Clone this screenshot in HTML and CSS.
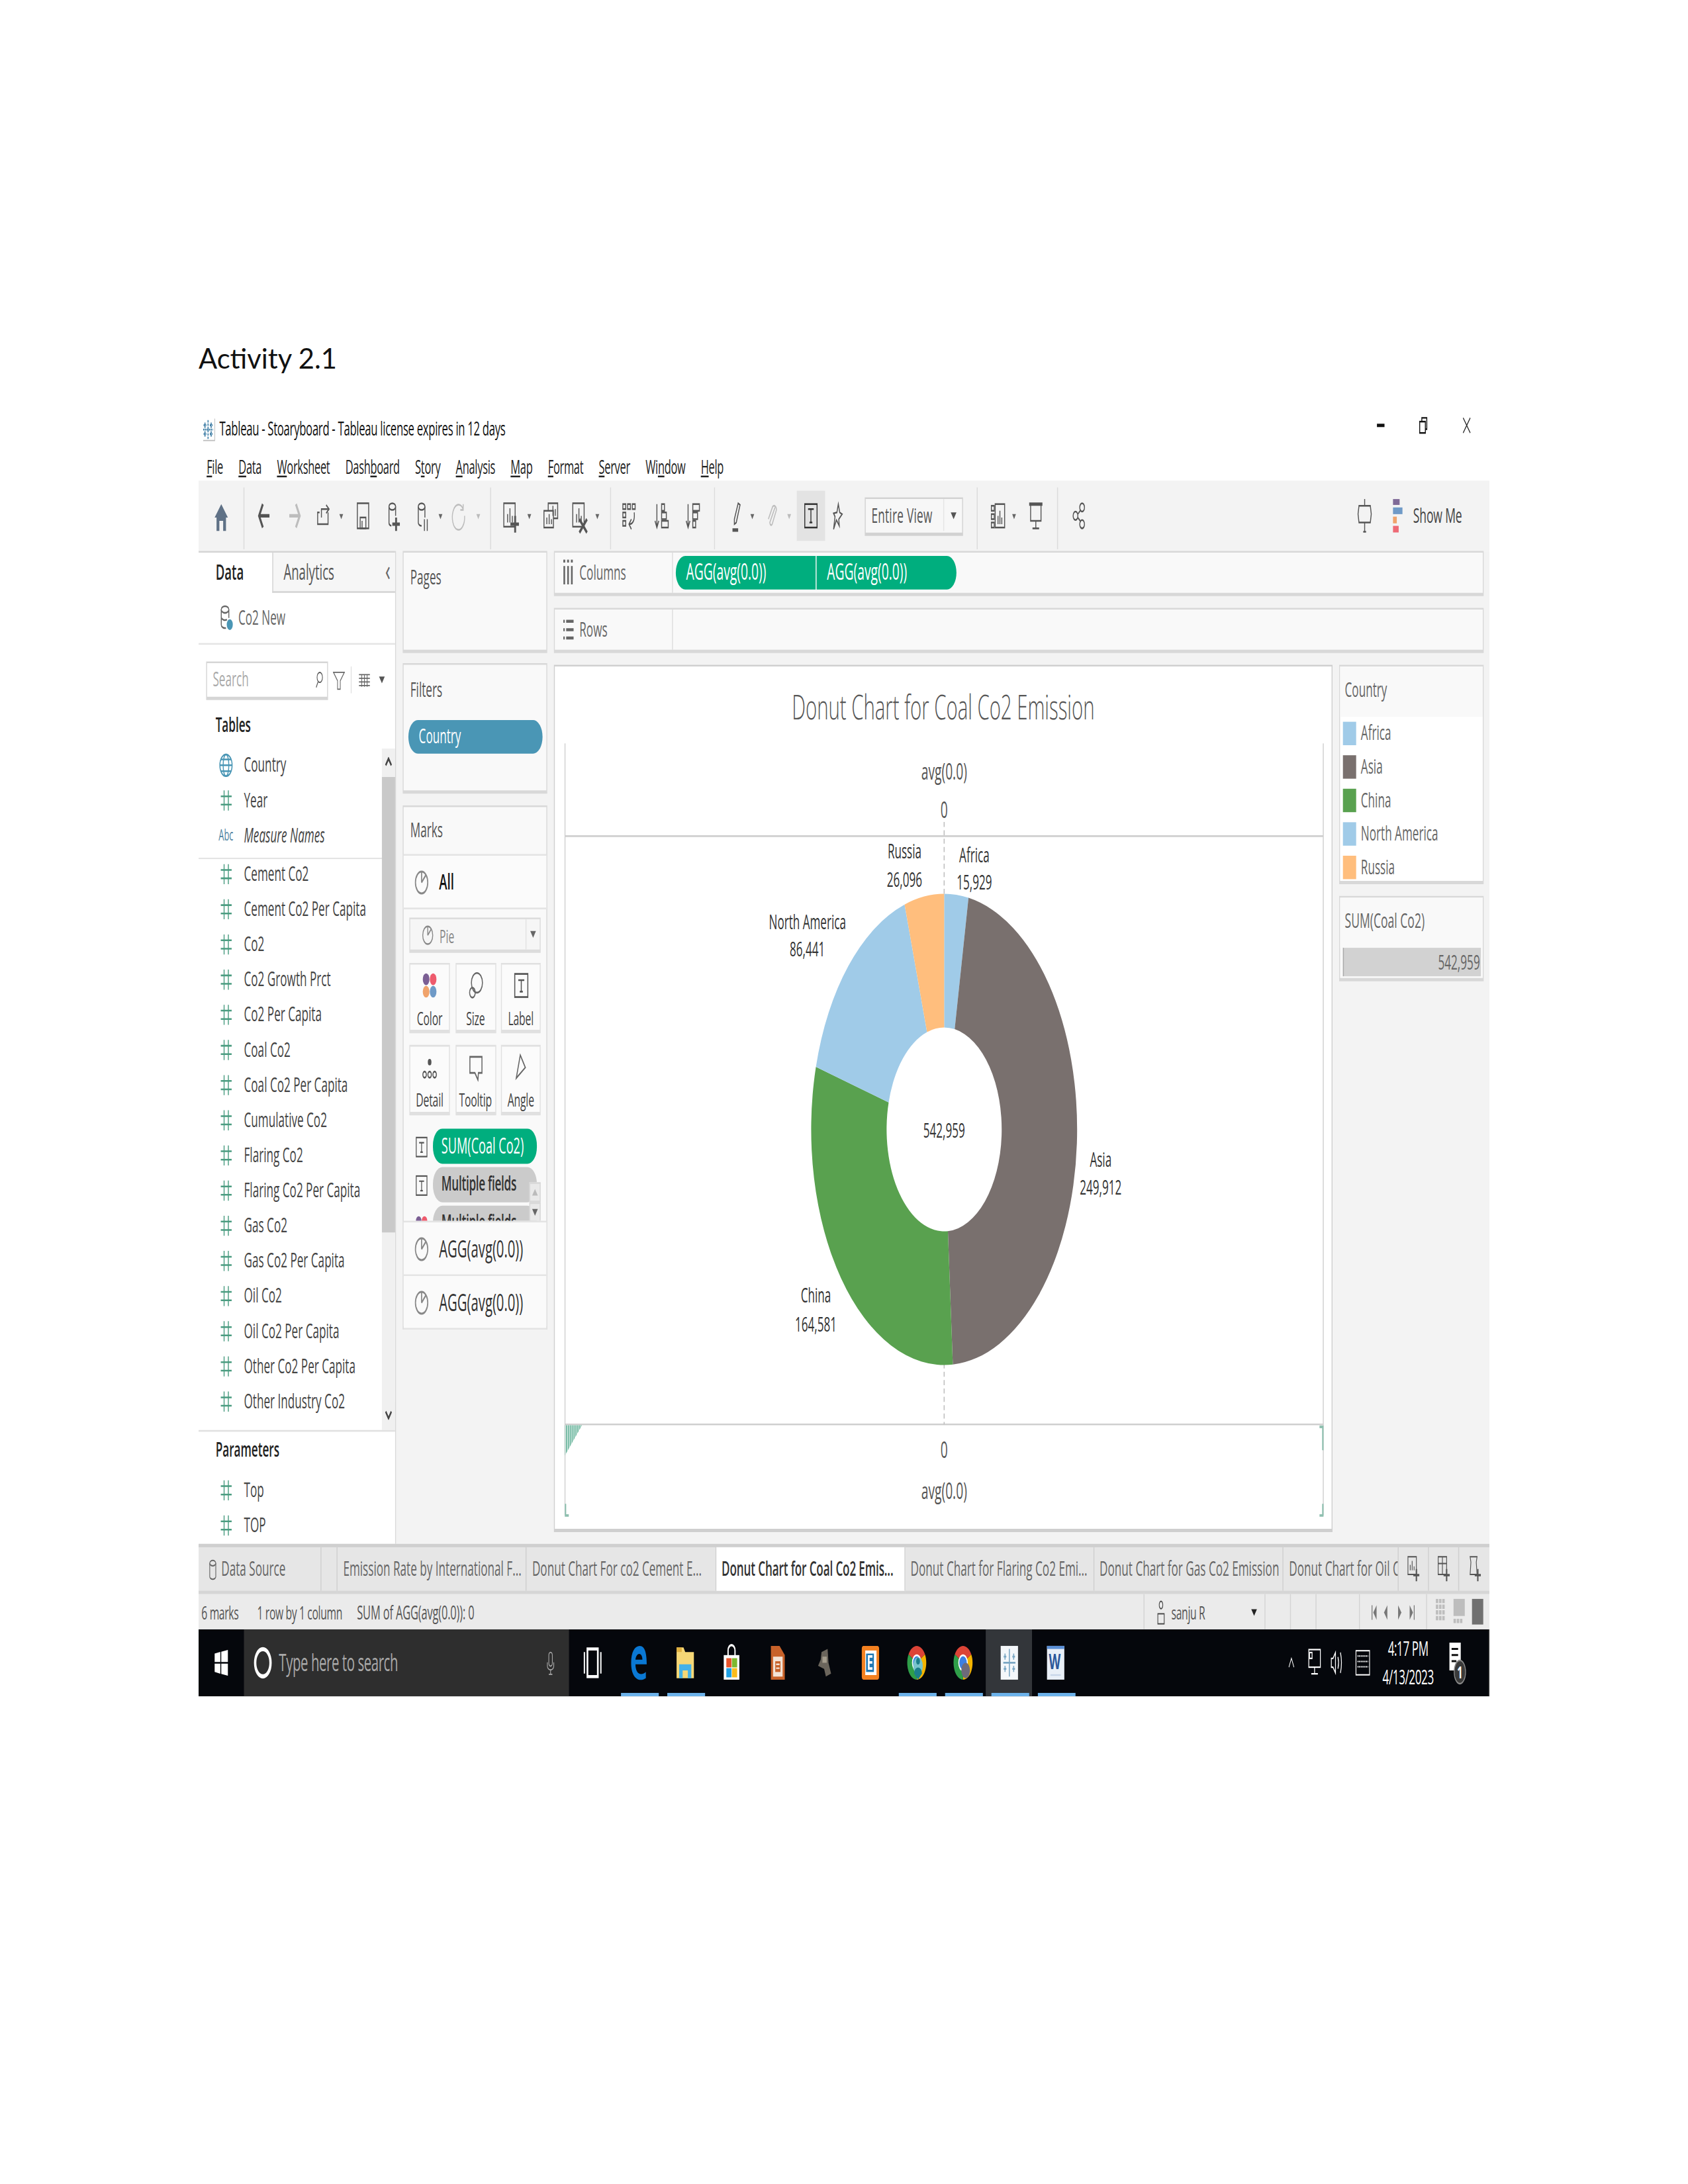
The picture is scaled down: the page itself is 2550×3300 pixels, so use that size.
FILE: index.html
```html
<!DOCTYPE html>
<html lang="en">
<head>
<meta charset="utf-8">
<title>Activity 2.1</title>
<link rel="stylesheet" href="styles.css">
</head>
<body>
<svg class="defs" width="0" height="0" aria-hidden="true">
  <defs>
    <symbol id="hash" viewBox="0 0 16 16"><path d="M6 2V14M10.500 2V14M2.500 5.500H14M2.500 10.500H14" fill="none" stroke="#4a9c80" stroke-width="1"/></symbol>
    <symbol id="globe" viewBox="0 0 16 16"><g fill="none" stroke="#4a96b5" stroke-width="1"><circle cx="8" cy="8" r="6.500"/><ellipse cx="8" cy="8" rx="3" ry="6.500"/><path d="M1.500 8H14.500M2.500 4.500H13.500M2.500 11.500H13.500"/></g></symbol>
    <symbol id="pie" viewBox="0 0 16 16"><g fill="none" stroke="#888" stroke-width="1.200"><circle cx="8" cy="8" r="6.500"/><path d="M8 8V1.500M8 8L12.500 3.500"/></g></symbol>
    <symbol id="tbox" viewBox="0 0 16 16"><g fill="none" stroke="#555" stroke-width="1"><rect x="1.500" y="1.500" width="13" height="13"/><path d="M5 5H11M8 5V11.500M6.500 11.500H9.500"/></g></symbol>
  </defs>
</svg>
<main class="page">
  <h1 class="activity">Activity 2.1</h1>
  <div class="app">
    <header class="titlebar">
      <svg class="tbicon" viewBox="0 0 16 16"><path d="M15 1V15H2" fill="none" stroke="#bbb" stroke-width=".7"/><g stroke="#3f7ea6" stroke-width="1.200" fill="none" stroke-dasharray="1.500 .6"><path d="M7.500 2V14M2 8H13M4 3.500V7M2.500 5.200H5.500M11 3.500V7M9.500 5.200H12.500M4 9V12.500M2.500 10.800H5.500M11 9V12.500M9.500 10.800H12.500"/></g></svg>
      <span class="titletext">Tableau - Stoaryboard - Tableau license expires in 12 days</span>
      <div class="winctrl">
        <span class="wc-min"></span>
        <svg class="wc-res" viewBox="0 0 16 16"><g fill="none" stroke="#111" stroke-width="1.300"><rect x="3" y="5" width="8" height="9"/><path d="M6 5V2H13V11H11"/></g></svg>
        <svg class="wc-x" viewBox="0 0 16 16"><path d="M3 2L13 14M13 2L3 14" fill="none" stroke="#222" stroke-width="1"/></svg>
      </div>
    </header>
    <nav class="menubar">
      <span><u>F</u>ile</span><span><u>D</u>ata</span><span><u>W</u>orksheet</span><span>Dash<u>b</u>oard</span><span>S<u>t</u>ory</span><span><u>A</u>nalysis</span><span><u>M</u>ap</span><span><u>F</u>ormat</span><span><u>S</u>erver</span><span>Wi<u>n</u>dow</span><span><u>H</u>elp</span>
    </nav>
    <div class="toolbar">
      <svg class="strip-a" viewBox="0 0 705 42">
        <g class="tb">
          <path d="M48 4V41M309 4V41M436 4V41M546 4V41" class="divl"/>
          <path d="M24 14L31 22H29V30H26V24H22V30H19V22H17Z" class="home"/>
          <g transform="translate(61,13)" class="heavy"><path d="M14 8H4M7 1L3 8L7 15"/></g>
          <g transform="translate(94,13)" class="heavy light"><path d="M2 8H12M9 1L13 8L9 15"/></g>
          <g transform="translate(125,13)"><path d="M3 6H1V13H12V6M5 9V4H12M10 1.500L13 4L10 6.500"/></g>
          <path d="M149 20h4l-2 3z" class="dd"/>
          <g transform="translate(166,13)"><rect x="2" y=".5" width="12" height="15"/><rect x="5" y="9" width="6" height="6.500"/><path d="M7 15.500V11"/></g>
          <g transform="translate(197,13)"><ellipse cx="8" cy="2.500" rx="3.500" ry="2"/><path d="M4.500 2.500V12A3.500 2 0 0 0 7 14M11.500 2.500V8"/><path d="M12 9V17M8 13H16" class="heavy"/></g>
          <g transform="translate(228,13)"><ellipse cx="8" cy="2.500" rx="3.500" ry="2"/><path d="M4.500 2.500V12A3.500 2 0 0 0 8 14M11.500 2.500V9M11 10V17M14 10V17"/></g>
          <path d="M254 20h4l-2 3z" class="dd"/>
          <g transform="translate(267,13)" class="light"><path d="M13 4A6.500 7.500 0 1 0 14.500 8M13 1V4.500H10"/></g>
          <path d="M294 20h4l-2 3z" class="dd lightf"/>
          <g transform="translate(321,13)"><rect x="2" y=".5" width="12" height="14"/><path d="M6 12V7M8.500 12V3.500M11 12V8"/><path d="M14 8V18M9 13H18" class="heavy"/></g>
          <path d="M348 20h4l-2 3z" class="dd"/>
          <g transform="translate(364,13)"><rect x="6" y=".5" width="10" height="9"/><rect x="1.500" y="5" width="10" height="10" class="bgf"/><path d="M4.500 13V9M7 13V7M9.500 13V10"/><path d="M11 2V8M13.500 4V8"/></g>
          <g transform="translate(394,13)"><rect x="2" y=".5" width="12" height="14"/><path d="M6 12V7M8.500 12V3.500M11 12V8"/><path d="M9 10L17 18M17 10L9 18" class="heavy"/></g>
          <path d="M420 20h4l-2 3z" class="dd"/>
          <g transform="translate(448,13)"><rect x="1" y="1" width="3" height="3"/><rect x="6" y="1" width="3" height="3"/><rect x="11" y="1" width="3" height="3"/><rect x="1" y="6" width="3" height="3"/><rect x="1" y="11" width="3" height="3"/><path d="M13 6C14 11 11 13 8 13M10 10L7.500 13L10 16"/></g>
          <g transform="translate(482,13)"><path d="M3 1V15M1 11L3 15L5 11"/><rect x="8" y="1" width="3" height="4"/><rect x="8" y="6" width="5" height="4"/><rect x="8" y="11" width="7" height="4"/></g>
          <g transform="translate(515,13)"><path d="M3 1V15M1 11L3 15L5 11"/><rect x="8" y="1" width="7" height="4"/><rect x="8" y="6" width="5" height="4"/><rect x="8" y="11" width="3" height="4"/></g>
          <g transform="translate(561,13)"><path d="M10 .5L12 1.500L8 12L6 13L6 10Z"/><path d="M4 16.500H10" class="heavy"/></g>
          <path d="M584 20h4l-2 3z" class="dd"/>
          <g transform="translate(599,13)" class="light"><path d="M11 3L5.500 12A1.500 2 0 0 0 8 13L12.500 4.500A2.500 2.500 0 0 0 8.500 2.500L4 10"/></g>
          <path d="M623 20h4l-2 3z" class="dd lightf"/>
          <rect x="633" y="6" width="30" height="30" class="active-bg"/>
          <g transform="translate(640,13)" class="dark"><rect x="1.500" y="1" width="13" height="14"/><path d="M5 4H11M8 4V12M6.500 12H9.500"/></g>
          <g transform="translate(668,13)"><path d="M9 1L10.500 6L13 7L9.500 10L10 14L7 10.500L4 16L5.500 8.500L4 6.500L7.500 6Z"/></g>
        </g>
      </svg>
      <div class="combo"><span class="combo-text">Entire View</span><span class="combo-arrow"></span></div>
      <svg class="strip-b" viewBox="1 0 149 42">
        <g class="tb">
          <path d="M16 4V41M101 4V41" class="divl"/>
          <g transform="translate(30,13)"><rect x="5" y="1" width="10" height="14"/><rect x="1" y="2" width="3" height="3"/><rect x="1" y="7" width="3" height="3"/><rect x="1" y="12" width="3" height="3"/><path d="M8 13V8M10 13V5M12 13V9"/></g>
          <path d="M53 20h4l-2 3z" class="dd"/>
          <g transform="translate(70,13)"><path d="M1 1H15" class="heavy"/><path d="M2.500 1V11H13.500V1M8 11V15M4.500 15.500H11.500"/></g>
          <g transform="translate(116,13)"><circle cx="11" cy="3" r="2.500"/><circle cx="4" cy="8" r="2.500"/><circle cx="11" cy="13" r="2.500"/><path d="M6.500 7L9.500 4.500M6.500 9L9.500 11.500"/></g>
        </g>
      </svg>
      <div class="tb-right">
        <svg class="tb-tip" viewBox="0 0 16 20"><g class="tb"><path d="M8 0V4M2 4H14L15 9L14 14H2L1 9ZM8 14V19M6.500 19.500H9.500"/></g></svg>
        <svg class="tb-show" viewBox="0 0 12 20"><rect x="1" y="0" width="7" height="3.500" fill="#7f6a97"/><rect x="1" y="5" width="10" height="4" fill="#6f9ac7"/><rect x="1" y="10.500" width="4" height="4" fill="#f0a36b"/><rect x="1" y="16" width="6" height="4" fill="#ee6a75"/></svg>
        <span class="showme">Show Me</span>
      </div>
    </div>

    <div class="workspace">
      <aside class="datapane">
        <div class="dtabs">
          <span class="dtab-data">Data</span>
          <span class="dtab-an">Analytics<span class="collapse">‹</span></span>
        </div>
        <div class="dsrow">
          <svg class="ic" viewBox="0 0 16 16"><g fill="none" stroke="#666" stroke-width="1"><ellipse cx="7" cy="3" rx="4" ry="2"/><path d="M3 3V12A4 2 0 0 0 8 14M11 3V8M3 7.500A4 2 0 0 0 9 9"/></g><circle cx="12" cy="12" r="3.200" fill="#4a96b5"/></svg>
          <span>Co2 New</span>
        </div>
        <div class="searchrow">
          <div class="searchbox"><span class="ph">Search</span>
            <svg class="ic-s" viewBox="0 0 12 14"><g fill="none" stroke="#555" stroke-width="1"><ellipse cx="7" cy="5" rx="3.800" ry="4"/><path d="M4.500 8.500L2 13"/></g></svg>
          </div>
          <svg class="ic-f" viewBox="0 0 18 16"><path d="M1 1H17L11 8V15H7V8Z" fill="none" stroke="#666" stroke-width="1"/></svg>
          <span class="vsep"></span>
          <svg class="ic-l" viewBox="0 0 18 12"><path d="M1 1H17M1 4H17M1 7H17M1 10H17M5 .5V11M9 .5V11M13 .5V11" fill="none" stroke="#666" stroke-width="1"/></svg>
          <span class="tri"></span>
        </div>
        <h2 class="phead tables">Tables</h2>
        <div class="listwrap">
          <ul class="fields">
            <li><svg class="ic"><use href="#globe"/></svg>Country</li>
            <li><svg class="ic"><use href="#hash"/></svg>Year</li>
            <li class="mn"><span class="abc">Abc</span><em>Measure Names</em></li>
            <li><svg class="ic"><use href="#hash"/></svg>Cement Co2</li>
            <li><svg class="ic"><use href="#hash"/></svg>Cement Co2 Per Capita</li>
            <li><svg class="ic"><use href="#hash"/></svg>Co2</li>
            <li><svg class="ic"><use href="#hash"/></svg>Co2 Growth Prct</li>
            <li><svg class="ic"><use href="#hash"/></svg>Co2 Per Capita</li>
            <li><svg class="ic"><use href="#hash"/></svg>Coal Co2</li>
            <li><svg class="ic"><use href="#hash"/></svg>Coal Co2 Per Capita</li>
            <li><svg class="ic"><use href="#hash"/></svg>Cumulative Co2</li>
            <li><svg class="ic"><use href="#hash"/></svg>Flaring Co2</li>
            <li><svg class="ic"><use href="#hash"/></svg>Flaring Co2 Per Capita</li>
            <li><svg class="ic"><use href="#hash"/></svg>Gas Co2</li>
            <li><svg class="ic"><use href="#hash"/></svg>Gas Co2 Per Capita</li>
            <li><svg class="ic"><use href="#hash"/></svg>Oil Co2</li>
            <li><svg class="ic"><use href="#hash"/></svg>Oil Co2 Per Capita</li>
            <li><svg class="ic"><use href="#hash"/></svg>Other Co2 Per Capita</li>
            <li><svg class="ic"><use href="#hash"/></svg>Other Industry Co2</li>
          </ul>
          <div class="vscroll">
            <span class="sb-btn"><svg viewBox="0 0 8 6"><path d="M1 5L4 1L7 5" fill="none" stroke="#444" stroke-width="1.500"/></svg></span>
            <span class="sb-thumb"></span>
            <span class="sb-rest"></span>
            <span class="sb-btn"><svg viewBox="0 0 8 6"><path d="M1 1L4 5L7 1" fill="none" stroke="#444" stroke-width="1.500"/></svg></span>
          </div>
        </div>
        <h2 class="phead params">Parameters</h2>
        <ul class="fields paramlist">
          <li><svg class="ic"><use href="#hash"/></svg>Top</li>
          <li><svg class="ic"><use href="#hash"/></svg>TOP</li>
        </ul>
      </aside>

      <section class="cardscol">
        <div class="card pages"><div class="cardhead">Pages</div></div>
        <div class="card filters">
          <div class="cardhead">Filters</div>
          <div class="fpill">Country</div>
        </div>
        <div class="card marks">
          <div class="cardhead markhead">Marks</div>
          <div class="markrow all"><svg class="ic"><use href="#pie"/></svg><strong>All</strong></div>
          <div class="marktype"><svg class="ic-p"><use href="#pie"/></svg><span class="mt-text">Pie</span><span class="mt-arrow"></span></div>
          <div class="markgrid">
            <div class="mbtn">
              <svg viewBox="0 0 16 16"><circle cx="4.500" cy="4.500" r="3.300" fill="#7b5f94"/><circle cx="11.500" cy="4.500" r="3.300" fill="#ee5b6d"/><circle cx="4.500" cy="11.500" r="3.300" fill="#f0a36b"/><circle cx="11.500" cy="11.500" r="3.300" fill="#6f9ac7"/></svg>Color</div>
            <div class="mbtn"><svg viewBox="0 0 16 16"><g fill="none" stroke="#666" stroke-width="1"><circle cx="9" cy="6.500" r="5.500"/><circle cx="4.500" cy="12" r="2.800"/></g></svg>Size</div>
            <div class="mbtn"><svg viewBox="0 0 16 16"><use href="#tbox"/></svg>Label</div>
            <div class="mbtn"><svg viewBox="0 0 16 16"><g fill="none" stroke="#555" stroke-width="1"><circle cx="3" cy="12" r="1.700"/><circle cx="8" cy="12" r="1.700"/><circle cx="13" cy="12" r="1.700"/></g><circle cx="8" cy="5" r="1.800" fill="#555"/></svg>Detail</div>
            <div class="mbtn"><svg viewBox="0 0 16 16"><path d="M2 2H14V11H10.500L10 15L7 11H2Z" fill="none" stroke="#666" stroke-width="1"/></svg>Tooltip</div>
            <div class="mbtn"><svg viewBox="0 0 16 16"><path d="M7 1L12 8L3 14Z" fill="none" stroke="#666" stroke-width="1"/></svg>Angle</div>
          </div>
          <div class="pillarea">
            <div class="pillrow"><svg class="ic-t"><use href="#tbox"/></svg><span class="mpill green">SUM(Coal Co2)</span></div>
            <div class="pillrow"><svg class="ic-t"><use href="#tbox"/></svg><span class="mpill gray">Multiple fields</span></div>
            <div class="pillrow"><svg class="ic-t" viewBox="0 0 16 16"><circle cx="4.500" cy="6" r="3.400" fill="#7b5f94"/><circle cx="11.500" cy="6" r="3.400" fill="#ee5b6d"/></svg><span class="mpill gray">Multiple fields</span></div>
            <div class="miniscroll"><span class="ms-up"></span><span class="ms-down"></span></div>
          </div>
          <div class="markrow agg"><svg class="ic"><use href="#pie"/></svg><span>AGG(avg(0.0))</span></div>
          <div class="markrow agg"><svg class="ic"><use href="#pie"/></svg><span>AGG(avg(0.0))</span></div>
        </div>
      </section>

      <section class="maincol">
        <div class="shelf">
          <div class="shelflabel">
            <svg class="ic-sh" viewBox="0 0 12 16"><path d="M2 4V15M6 4V15M10 4V15M1 1H3M5 1H7M9 1H11" fill="none" stroke="#666" stroke-width="1.800"/></svg>Columns
          </div>
          <div class="shelfpills"><span class="spill first">AGG(avg(0.0))</span><span class="spill last">AGG(avg(0.0))</span></div>
        </div>
        <div class="shelf">
          <div class="shelflabel">
            <svg class="ic-sh" viewBox="0 0 12 16"><path d="M1 3H2.500M4 3H12M1 8H2.500M4 8H12M1 13H2.500M4 13H12" fill="none" stroke="#666" stroke-width="1.800"/></svg>Rows
          </div>
        </div>
        <div class="vizrow">
          <div class="viz">
            <svg class="chart" viewBox="377 153 822 516" role="img" aria-label="Donut Chart for Coal Co2 Emission">
              <defs>
                <pattern id="hatch" width="2" height="4" patternUnits="userSpaceOnUse"><rect width="1.400" height="4" fill="#6fb8a0"/></pattern>
              </defs>
              <text x="788" y="184.500" class="ctitle">Donut Chart for Coal Co2 Emission</text>
              <path d="M387 199V661M1191 199V661M387 254.500H1191M387 606.500H1191" class="axis"/>
              <path d="M789 246V290M789 570V606.500" class="dash"/>
              <path d="M387 607H405L387 625Z" fill="url(#hatch)"/>
              <path d="M391 661H387.500V654M1187 661H1190.500V654M1187 608H1190.500V622" class="bracket"/>
              <text x="789" y="220.500" class="ax">avg(0.0)</text>
              <text x="789" y="243.500" class="ax">0</text>
              <text x="789" y="626.500" class="ax">0</text>
              <text x="789" y="651" class="ax">avg(0.0)</text>
              <g transform="translate(789,430)">
                <path d="M0 -141A141 141 0 0 1 25.840 -138.610L11.180 -59.970A61 61 0 0 0 0 -61Z" fill="#a0cbe8"/>
                <path d="M25.840 -138.610A141 141 0 0 1 9.200 140.700L3.980 60.870A61 61 0 0 0 11.180 -59.970Z" fill="#79706e"/>
                <path d="M9.200 140.700A141 141 0 0 1 -135.950 -37.400L-58.820 -16.180A61 61 0 0 0 3.980 60.870Z" fill="#59a14f"/>
                <path d="M-135.950 -37.400A141 141 0 0 1 -41.960 -134.610L-18.150 -58.240A61 61 0 0 0 -58.820 -16.180Z" fill="#a0cbe8"/>
                <path d="M-41.960 -134.610A141 141 0 0 1 0 -141L0 -61A61 61 0 0 0 -18.150 -58.240Z" fill="#ffbe7d"/>
              </g>
              <text x="747" y="268" class="lbl">Russia</text><text x="747" y="285" class="lbl">26,096</text>
              <text x="821" y="270" class="lbl">Africa</text><text x="821" y="286.500" class="lbl">15,929</text>
              <text x="644" y="310" class="lbl">North America</text><text x="644" y="326.500" class="lbl">86,441</text>
              <text x="789" y="435" class="lbl">542,959</text>
              <text x="955" y="452.500" class="lbl">Asia</text><text x="955" y="469" class="lbl">249,912</text>
              <text x="653" y="533.500" class="lbl">China</text><text x="653" y="551" class="lbl">164,581</text>
            </svg>
          </div>
          <div class="legends">
            <div class="legend card">
              <div class="leghead">Country</div>
              <ul class="legitems">
                <li><span class="sw s-blue"></span>Africa</li>
                <li><span class="sw s-brown"></span>Asia</li>
                <li><span class="sw s-green"></span>China</li>
                <li><span class="sw s-blue"></span>North America</li>
                <li><span class="sw s-orange"></span>Russia</li>
              </ul>
            </div>
            <div class="legend card sumcard">
              <div class="leghead sumhead">SUM(Coal Co2)</div>
              <div class="sumbar">542,959</div>
            </div>
          </div>
        </div>
      </section>
    </div>

    <div class="tabs">
      <span class="tab t-ds"><svg class="ic-ds" viewBox="0 0 10 16"><g fill="none" stroke="#666" stroke-width="1"><ellipse cx="5" cy="3" rx="4" ry="2"/><path d="M1 3V13A4 2 0 0 0 9 13V3"/></g></svg>Data Source</span>
      <span class="tab t-blank"></span>
      <span class="tab t-200">Emission Rate by International F...</span>
      <span class="tab t-200b">Donut Chart For co2 Cement  E...</span>
      <span class="tab t-200 active">Donut Chart for Coal Co2 Emis...</span>
      <span class="tab t-200">Donut Chart for Flaring Co2 Emi...</span>
      <span class="tab t-200b">Donut Chart for Gas Co2 Emission</span>
      <span class="tab t-oil">Donut Chart for Oil Co2 Emission</span>
      <span class="tab t-ic"><svg viewBox="0 0 16 20"><g fill="none" stroke="#555" stroke-width="1"><rect x="1" y="1" width="11" height="13"/><path d="M4 11V7M6.500 11V4M9 11V8"/><path d="M12 10V19M8 14.500H16" stroke-width="1.800"/></g></svg></span>
      <span class="tab t-ic"><svg viewBox="0 0 16 20"><g fill="none" stroke="#555" stroke-width="1"><rect x="1" y="1" width="11" height="13"/><path d="M6.500 1V14M1 6H12"/><path d="M12 10V19M8 14.500H16" stroke-width="1.800"/></g></svg></span>
      <span class="tab t-ic last"><svg viewBox="0 0 16 20"><g fill="none" stroke="#555" stroke-width="1"><path d="M2 1H11L10 5L11 14H2L3 5Z"/><path d="M12 10V19M8 14.500H16" stroke-width="1.800"/></g></svg></span>
    </div>

    <div class="status">
      <span class="st-marks">6 marks</span>
      <span class="st-rows">1 row by 1 column</span>
      <span class="st-sum">SUM of AGG(avg(0.0)): 0</span>
      <div class="st-right">
        <div class="stc st-user"><svg class="ic-u" viewBox="0 0 12 20"><g fill="none" stroke="#444" stroke-width="1"><ellipse cx="6" cy="4" rx="2.500" ry="3"/><rect x="1.500" y="11" width="9" height="8"/></g></svg><span>sanju R</span><span class="tri dark"></span></div>
        <div class="stc st-27"></div>
        <div class="stc st-27"></div>
        <div class="stc st-46"></div>
        <div class="stc st-nav">
          <svg viewBox="0 0 60 16"><g fill="#777"><path d="M3 3V13H4V3ZM9 3L5 8L9 13Z"/><path d="M22 3L18 8L22 13Z"/><path d="M35 3L39 8L35 13Z"/><path d="M49 3L53 8L49 13ZM54 3V13H55V3Z"/></g></svg>
        </div>
        <div class="stc st-view">
          <svg viewBox="0 0 62 20"><g fill="#bdbdbd"><path d="M2 1h3v3h-3zM6 1h3v3h-3zM10 1h3v3h-3zM2 5h3v3h-3zM6 5h3v3h-3zM10 5h3v3h-3zM2 9h3v3h-3zM6 9h3v3h-3zM10 9h3v3h-3zM2 13h3v3h-3zM6 13h3v3h-3zM10 13h3v3h-3z"/><rect x="24" y="1" width="14" height="12"/><path d="M24 15h3v3h-3zM28 15h3v3h-3zM32 15h3v3h-3z"/></g><rect x="47" y="1" width="14" height="18" fill="#707070"/></svg>
        </div>
      </div>
    </div>

    <footer class="taskbar">
      <div class="tk-start"><svg class="ic-win" viewBox="0 0 16 16"><path d="M1 2.500L7 1.500V7.500H1ZM8 1.400L15 .3V7.500H8ZM1 8.500H7V14.500L1 13.500ZM8 8.500H15V15.700L8 14.600Z" fill="#fff"/></svg></div>
      <div class="tk-search">
        <svg class="ic-cort" viewBox="0 0 16 16"><circle cx="8" cy="8" r="6.500" fill="none" stroke="#fff" stroke-width="2"/></svg>
        <span class="tk-ph">Type here to search</span>
        <svg class="ic-mic" viewBox="0 0 12 20"><g fill="none" stroke="#aaa" stroke-width="1"><rect x="3.500" y="1" width="5" height="11" rx="2.500"/><path d="M1.500 9V12A4.500 3 0 0 0 10.500 12V9M6 15V18M3.500 18.500H8.500"/></g></svg>
      </div>
      <div class="tk-apps">
        <span class="app-c"><svg viewBox="0 0 24 24"><g fill="none" stroke="#fff"><rect x="6" y="3" width="12" height="18" stroke-width="2"/><path d="M2.500 5V19M21.500 5V19" stroke-width="1.500"/></g></svg></span>
        <span class="app-c on"><svg viewBox="0 0 24 24"><path d="M3 12C3 5 7 1 13 1C19 1 21 6 21 13H8C8 19 14 21 20 18V22C12 25 3 22 3 12ZM8 10H16C16 5 9 5 8 10Z" fill="#0a78d4"/></svg></span>
        <span class="app-c on"><svg viewBox="0 0 24 24"><path d="M2 2H10L12 5H22V22H2Z" fill="#f6d776"/><path d="M2 2H8V5H2Z" fill="#e0b040"/><path d="M5 13H19V22H15V17H9V22H5Z" fill="#45b1e8"/></svg></span>
        <span class="app-c"><svg viewBox="0 0 24 24"><path d="M3 7H21V23H3Z" fill="#fff"/><path d="M8 8V4A4 3.500 0 0 1 16 4V8" fill="none" stroke="#fff" stroke-width="1.500"/><rect x="6" y="9" width="6" height="6" fill="#e8532b"/><rect x="12.500" y="9" width="6" height="6" fill="#7db82e"/><rect x="6" y="15.500" width="6" height="6" fill="#1ea0e6"/><rect x="12.500" y="15.500" width="6" height="6" fill="#fbbb1a"/></svg></span>
        <span class="app-c"><svg viewBox="0 0 24 24"><path d="M4 1H14L20 7V23H4Z" fill="#c8622a"/><path d="M6.500 8H17.500V21H6.500Z" fill="#f3e3d6"/><path d="M9 11H15V18H9Z" fill="#c8622a"/><path d="M10 13H14M10 15.500H14" stroke="#f3e3d6"/></svg></span>
        <span class="app-c"><svg viewBox="0 0 24 24"><path d="M9 5L16 3L17 12L20 19L14 21L12 16L5 14L8 10Z" fill="#6b655c"/><path d="M10 8H15V12H10Z" fill="#a49c8d"/></svg></span>
        <span class="app-c"><svg viewBox="0 0 24 24"><rect x="2" y="1" width="20" height="22" rx="2" fill="#f48120"/><rect x="6" y="4" width="13" height="16" fill="#fff"/><rect x="7" y="6" width="9" height="12" fill="#1f78b4"/><text x="11.500" y="16.500" class="e-letter">E</text></svg></span>
        <span class="app-c on"><svg viewBox="0 0 24 24"><use href="#chrome"/><circle cx="13.500" cy="14" r="5.500" fill="#79c4cc"/><circle cx="13.500" cy="11" r="2.200" fill="#1b7f8c"/><path d="M9 19A4.500 4 0 0 1 18 19L13.500 23Z" fill="#1b7f8c"/></svg></span>
        <span class="app-c on two"><svg viewBox="0 0 24 24"><use href="#chrome"/><circle cx="15" cy="17" r="5" fill="#6d6a7a"/></svg></span>
        <span class="app-c on act"><svg viewBox="0 0 24 24"><rect x="2" y="1" width="20" height="22" fill="#f4f7fa"/><g stroke="#7ba7c4" stroke-width="1.200" fill="none"><path d="M12 3V21M5 12H19M7 6V10M5.500 8H8.500M17 6V10M15.500 8H18.500M7 14V18M5.500 16H8.500M17 14V18M15.500 16H18.500"/></g></svg></span>
        <span class="app-c on"><svg viewBox="0 0 24 24"><rect x="2" y="1" width="20" height="22" fill="#e9eff7"/><rect x="2" y="1" width="20" height="2" fill="#5b8fd6"/><text x="11" y="16" class="w-letter">W</text><path d="M6 20H18" stroke="#c7d5e8"/></svg></span>
      </div>
      <div class="tray">
        <span class="tr t24"><svg viewBox="0 0 12 12"><path d="M2 10L6 2L10 10" fill="none" stroke="#fff" stroke-width="1"/></svg></span>
        <span class="tr t25"><svg viewBox="0 0 16 20"><g fill="none" stroke="#fff" stroke-width="1"><rect x="1" y="1" width="14" height="12"/><rect x="2" y="3" width="3" height="4"/><path d="M8 13V17M4 17.500H12"/></g></svg></span>
        <span class="tr t21"><svg viewBox="0 0 16 20"><g fill="none" stroke="#fff" stroke-width="1"><path d="M2 7H4L7 3V17L4 13H2Z"/><path d="M10 6Q11.500 10 10 14M13 3Q15.500 10 13 17"/></g></svg></span>
        <span class="tr t36"><svg viewBox="0 0 20 20"><g fill="none" stroke="#fff" stroke-width="1"><rect x="1" y="1" width="18" height="18"/><path d="M3 5H17M3 9H17M3 13H17" stroke-dasharray="1.500 .7"/></g></svg></span>
        <span class="clock"><span>4:17 PM</span><span>4/13/2023</span></span>
        <span class="tr t44"><svg viewBox="0 0 26 30"><path d="M4 2H17V20H4Z" fill="#fff"/><path d="M6.500 6H14M6.500 10H14M6.500 14H12" stroke="#111" stroke-width="1.300"/><ellipse cx="16" cy="21" rx="6.500" ry="7.500" fill="#3a3a3a" stroke="#888"/><text x="16" y="25" class="notif">1</text></svg></span>
      </div>
      <svg class="defs" width="0" height="0" aria-hidden="true"><defs>
        <g id="chrome"><path d="M12 12L2.500 6.500A11 11 0 0 1 21.500 6.500Z" fill="#dc4437"/><path d="M12 12L21.500 6.500A11 11 0 0 1 12 23Z" fill="#f4b400"/><path d="M12 12L12 23A11 11 0 0 1 2.500 6.500Z" fill="#2f9e49"/><circle cx="12" cy="12" r="5.500" fill="#fff"/><circle cx="12" cy="12" r="4.300" fill="#3d7fe3"/></g>
      </defs></svg>
    </footer>
  </div>
</main>
</body>
</html>
```
FILE: styles.css
```css
* { box-sizing: border-box; }
html, body { margin: 0; padding: 0; background: #fff; }
body { min-height: 3300px; overflow: hidden; }
.defs { position: absolute; }
ul { list-style: none; margin: 0; padding: 0; }
svg { display: block; }

.page { padding-left: 300px; }
.activity {
  margin: 0; height: 620px; padding-top: 515px;
  font: 400 41.700px/1.25 Lato, "Open Sans", sans-serif; color: #111;
}

/* The app is laid out at its native 1366x768 size, then stretched the way the screenshot was */
.app {
  width: 1366px; height: 768px;
  transform: scale(1.4275, 2.53); transform-origin: 0 0;
  display: flex; flex-direction: column;
  font: 400 12px/1 "Open Sans", "Liberation Sans", sans-serif; color: #444;
  background: #fff;
}

.titlebar { height: 22px; display: flex; align-items: center; padding-left: 3px; position: relative; color: #111; }
.tbicon { width: 15px; height: 15px; margin-right: 4px; }
.titletext { font-size: 11.700px; letter-spacing: -.2px; }
.winctrl { margin-left: auto; height: 18px; display: flex; align-items: center; padding-right: 17px; align-self: flex-start; }
.wc-min { width: 8px; height: 1.500px; background: #111; }
.wc-res { width: 14px; height: 12px; margin-left: 34px; }
.wc-x { width: 14px; height: 12px; margin-left: 32px; }

.menubar { height: 20px; display: flex; align-items: center; padding: 2.500px 0 0 8.500px; gap: 16.300px; color: #222; font-size: 11.500px; letter-spacing: -.2px; }

.toolbar { height: 42px; display: flex; align-items: center; background: #f3f3f3; }
.strip-a { width: 705px; height: 42px; flex: none; }
.strip-b { width: 149px; height: 42px; flex: none; }
.tb { fill: none; stroke: #555; stroke-width: 1; }
.tb .divl { stroke: #dcdcdc; }
.tb .home { fill: #5f7186; stroke: none; }
.tb .heavy { stroke-width: 2; }
.tb .light { stroke: #bdbdbd; }
.tb .dark { stroke: #333; }
.tb .dd { fill: #666; stroke: none; }
.tb .lightf { fill: #bbb; }
.tb .bgf { fill: #f3f3f3; }
.tb .active-bg { fill: #e3e3e3; stroke: none; }
.combo { width: 104px; height: 23px; display: flex; background: #f7f7f7; border: 1px solid #d2d2d2; border-bottom-width: 2px; flex: none; }
.combo-text { flex: 1; padding-left: 6px; align-self: center; letter-spacing: .2px; color: #555; border-right: 1px solid #e4e4e4; line-height: 19px; height: 19px; }
.combo-arrow { width: 19px; position: relative; }
.combo-arrow::after { content: ""; position: absolute; left: 7px; top: 8px; border: 3px solid transparent; border-top: 4px solid #555; border-bottom: 0; }
.tb-right { margin-left: auto; display: flex; align-items: center; padding-right: 29px; }
.tb-tip { width: 16px; height: 22px; margin-right: 21px; }
.tb-show { width: 12px; height: 20px; margin-right: 10px; }
.showme { color: #444; font-size: 12.300px; letter-spacing: -.1px; }

.workspace { height: 593px; display: flex; background: #f3f3f3; }

/* data pane */
.datapane { width: 209px; flex: none; background: #fff; border-right: 1px solid #d8d8d8; display: flex; flex-direction: column; }
.dtabs { height: 25px; display: flex; border-top: 1px solid #d4d4d4; font-size: 13px; }
.dtab-data { width: 78px; line-height: 23px; font-weight: 600; color: #222; padding-left: 18px; }
.dtab-an { flex: 1; background: #f6f6f6; border-left: 1px solid #d4d4d4; border-bottom: 1px solid #d4d4d4; line-height: 23px; padding-left: 11px; position: relative; color: #555; }
.collapse { position: absolute; right: 5px; top: -1px; font-size: 18px; color: #666; }
.dsrow { height: 31px; display: flex; align-items: center; border-bottom: 1px solid #e4e4e4; padding-left: 21px; gap: 5px; color: #666; }
.ic { width: 16px; height: 16px; flex: none; }
.searchrow { margin-top: 9.700px; height: 23px; display: flex; align-items: center; padding-left: 8px; flex: none; }
.searchbox { width: 129px; height: 23px; border: 1px solid #d6d6d6; border-bottom-width: 2px; display: flex; align-items: center; justify-content: space-between; padding: 0 4px 0 6px; }
.ph { color: #aaa; }
.ic-s { width: 9px; height: 12px; }
.ic-f { width: 13px; height: 15px; margin-left: 5px; }
.vsep { width: 1px; height: 16px; background: #e2e2e2; margin: 0 7px 0 6px; }
.ic-l { width: 13px; height: 9px; }
.tri { width: 0; height: 0; border: 3px solid transparent; border-top: 4px solid #555; border-bottom: 0; margin-left: 9px; }
.phead { margin: 0; font-size: 12px; font-weight: 600; color: #222; padding-left: 18px; }
.tables { height: 29.100px; line-height: 30px; flex: none; }
.listwrap { height: 408px; display: flex; flex: none; border-bottom: 1px solid #e0e0e0; }
.fields { flex: 1; }
.fields li { height: 21px; display: flex; align-items: center; gap: 11px; padding-left: 21px; color: #444; white-space: nowrap; }
.fields li.mn { height: 23px; box-shadow: 0 1px 0 #e4e4e4; padding-bottom: 3px; }
.abc { width: 16px; font-size: 9px; color: #4a7f9e; text-align: center; flex: none; }
.vscroll { width: 14px; background: #f0f0f0; display: flex; flex-direction: column; flex: none; }
.sb-btn { height: 17px; display: flex; align-items: center; justify-content: center; flex: none; background: #f0f0f0; }
.sb-btn svg { width: 8px; height: 6px; }
.sb-thumb { height: 272px; background: #c9c9c9; flex: none; }
.sb-rest { flex: 1; }
.params { height: 25px; line-height: 22.500px; flex: none; }
.paramlist { flex: none; }

/* filters, pages, marks */
.cardscol { width: 153px; margin-left: 7px; display: flex; flex-direction: column; flex: none; }
.card { background: #f9f9f9; border: 1px solid #d8d8d8; border-bottom-width: 2px; }
.pages { height: 61px; }
.filters { height: 78px; margin-top: 6px; }
.marks { height: 313px; margin-top: 7px; }
.cardhead { height: 30px; line-height: 29px; padding-left: 7px; color: #555; }
.filters .cardhead { height: 33px; line-height: 30px; }
.fpill { height: 20px; margin: 0 4px 0 5px; border-radius: 10px; background: #4a96b5; color: #fff; line-height: 19px; padding-left: 11px; }
.markhead { border-bottom: 1px solid #e4e4e4; height: 29px; line-height: 28px; }
.markrow { height: 32px; display: flex; align-items: center; padding-left: 11px; gap: 10.500px; border-bottom: 1px solid #e4e4e4; color: #333; }
.markrow strong { font-weight: 600; color: #111; font-size: 13px; }
.all { background: #fbfbfb; }
.marktype { margin: 5px 6px 0; height: 21px; display: flex; align-items: center; background: #f6f6f6; border: 1px solid #dcdcdc; border-bottom-width: 2px; padding-left: 12px; color: #888; font-size: 11px; }
.ic-p { width: 13px; height: 13px; margin-right: 6px; }
.mt-text { flex: 1; }
.mt-arrow { width: 15px; height: 100%; border-left: 1px solid #e2e2e2; position: relative; }
.mt-arrow::after { content: ""; position: absolute; left: 4px; top: 7px; border: 3px solid transparent; border-top: 4px solid #666; border-bottom: 0; }
.markgrid { margin: 6px 6px 0; display: grid; grid-template-columns: 43px 43px 42px; justify-content: space-between; row-gap: 7px; }
.mbtn { height: 42px; background: #fbfbfb; border: 1px solid #e0e0e0; border-bottom-width: 2px; display: flex; flex-direction: column; align-items: center; gap: 5px; padding-top: 4px; font-size: 11px; color: #444; letter-spacing: -.1px; }
.mbtn svg { width: 17px; height: 17px; flex: none; }
.pillarea { margin-top: 8px; height: 56px; overflow: hidden; position: relative; border-bottom: 1px solid #e4e4e4; padding-left: 12px; }
.pillrow { display: flex; align-items: center; gap: 5px; height: 21px; margin-bottom: 2px; }
.ic-t { width: 14px; height: 20px; flex: none; }
.mpill { height: 21px; width: 110px; border-radius: 10px; line-height: 20px; padding-left: 9px; white-space: nowrap; font-size: 12.700px; }
.green { background: #00ae7e; color: #fff; }
.gray { background: #cbcbcb; color: #333; font-size: 12px; font-weight: 600; letter-spacing: -.2px; }
.miniscroll { position: absolute; right: 6px; top: 32px; width: 12px; height: 24px; display: flex; flex-direction: column; background: #e9e9e9; }
.ms-up, .ms-down { flex: 1; position: relative; border: 1px solid #d8d8d8; }
.ms-up::after { content: ""; position: absolute; left: 2px; top: 3px; border: 3px solid transparent; border-bottom: 4px solid #bbb; border-top: 0; }
.ms-down::after { content: ""; position: absolute; left: 2px; top: 3px; border: 3px solid transparent; border-top: 4px solid #666; border-bottom: 0; }
.agg { background: #fafafa; font-size: 14.200px; padding-top: .5px; }

/* shelves, viz, legends */
.maincol { width: 984px; margin-left: 7px; flex: none; display: flex; flex-direction: column; gap: 7px; }
.shelf { height: 27px; display: flex; flex: none; background: #f9f9f9; border: 1px solid #d8d8d8; border-bottom-width: 2px; }
.shelflabel { width: 125px; display: flex; align-items: center; gap: 6px; padding-left: 8px; border-right: 1px solid #dedede; color: #666; font-size: 12px; }
.ic-sh { width: 12px; height: 16px; flex: none; }
.shelfpills { display: flex; padding: 2px 0 0 3px; gap: 1px; }
.spill { width: 148px; height: 20px; background: #00ae7e; color: #fff; line-height: 19px; padding-left: 11px; font-size: 13.500px; }
.first { border-radius: 10px 0 0 10px; }
.last { border-radius: 0 10px 10px 0; }
.vizrow { display: flex; gap: 7px; height: 518px; flex: none; }
.viz { width: 824px; background: #fff; border: 1px solid #cfcfcf; border-bottom-width: 2px; flex: none; }
.chart { width: 822px; height: 515px; }
.ctitle { font: 300 20.600px "Open Sans", sans-serif; fill: #555; text-anchor: middle; }
.axis { fill: none; stroke: #cfcfcf; stroke-width: 1; }
.dash { fill: none; stroke: #bbb; stroke-width: 1; stroke-dasharray: 3 2; }
.bracket { fill: none; stroke: #8fc0b0; stroke-width: 1.500; }
.ax { font-size: 13.500px; fill: #555; text-anchor: middle; }
.lbl { font-size: 12px; fill: #333; text-anchor: middle; }
.legends { width: 153px; display: flex; flex-direction: column; gap: 7px; flex: none; }
.legend { background: #fff; height: 131px; overflow: hidden; }
.leghead { height: 30px; line-height: 28px; padding-left: 5px; background: #f9f9f9; color: #666; font-size: 12px; }
.legitems { padding-left: 3px; }
.legitems li { height: 20px; display: flex; align-items: center; gap: 5px; color: #666; }
.sw { width: 14px; height: 14px; flex: none; }
.s-blue { background: #a0cbe8; }
.s-brown { background: #79706e; }
.s-green { background: #59a14f; }
.s-orange { background: #ffbe7d; }
.sumcard { height: 51px; background: #f9f9f9; }
.sumhead { height: 30px; font-size: 12.300px; }
.sumbar { margin: 0 2px 0 3px; height: 17px; background: #d2d2d2; border-left: 1px solid #aaa; text-align: right; line-height: 17px; color: #666; padding-right: 1px; }

/* tabs */
.tabs { height: 30px; display: flex; background: #e6e6e6; border-top: 2px solid #cfcfcf; border-bottom: 2px solid #d6d6d6; font-size: 12px; color: #666; }
.tab { display: flex; align-items: center; padding-left: 6px; padding-top: .8px; border-right: 1px solid #cfcfcf; white-space: nowrap; overflow: hidden; flex: none; }
.t-ds { width: 130px; padding-left: 11px; gap: 5px; }
.t-blank { width: 17px; }
.t-200 { width: 200px; }
.t-200b { width: 200.500px; }
.t-oil { width: 122px; }
.t-ic { width: 32px; justify-content: center; padding: 0; }
.t-ic.last { width: 32px; border-right: 0; }
.t-ic svg { width: 13px; height: 20px; }
.ic-ds { width: 8px; height: 13px; flex: none; }
.active { background: #fff; color: #333; font-weight: 600; letter-spacing: -.1px; }

/* status */
.status { height: 21px; display: flex; align-items: center; background: #ebebeb; font-size: 11px; color: #555; letter-spacing: -.25px; position: relative; }
.st-marks { padding-left: 3px; width: 62px; }
.st-rows { width: 105.600px; }
.st-sum { font-size: 11.500px; letter-spacing: -.1px; }
.st-right { margin-left: auto; height: 100%; display: flex; }
.stc { height: 100%; border-left: 1px solid #d4d4d4; display: flex; align-items: center; flex: none; }
.st-user { width: 128px; padding-left: 13px; gap: 7px; }
.st-user .tri { margin-left: 42px; }
.tri.dark { border-top-color: #222; }
.ic-u { width: 9px; height: 16px; flex: none; }
.st-27 { width: 27px; }
.st-46 { width: 46.500px; }
.st-nav { width: 71px; padding-left: 6px; }
.st-nav svg { width: 60px; height: 14px; }
.st-view { width: 67px; padding-left: 3px; }
.st-view svg { width: 62px; height: 17px; }

/* windows taskbar */
.taskbar { flex: 1; display: flex; background: #05070c; color: #fff; }
.tk-start { width: 48px; display: flex; align-items: center; justify-content: center; flex: none; }
.ic-win { width: 16px; height: 16px; }
.tk-search { width: 344px; background: #2e2e2e; display: flex; align-items: center; padding-left: 10px; flex: none; }
.ic-cort { width: 20px; height: 22px; flex: none; }
.tk-ph { color: #a8a8a8; margin-left: 7px; font-size: 14.300px; letter-spacing: -.3px; flex: 1; }
.ic-mic { width: 9px; height: 15px; margin-right: 15px; }
.tk-apps { display: flex; flex: none; }
.app-c { width: 49px; height: 100%; display: flex; align-items: center; justify-content: center; position: relative; }
.app-c svg { width: 22px; height: 24px; overflow: visible; }
.on::after { content: ""; position: absolute; left: 5.500px; right: 3.500px; bottom: 0; height: 2px; background: #6cb2ea; }
.act { background: #33363a; }
.e-letter { font: 700 13px "Open Sans", sans-serif; fill: #fff; text-anchor: middle; }
.w-letter { font: 700 14px "Open Sans", sans-serif; fill: #2b579a; text-anchor: middle; }
.notif { font: 700 11px "Open Sans", sans-serif; fill: #fff; text-anchor: middle; }
.tray { margin-left: auto; display: flex; align-items: center; padding-right: 11px; height: 100%; border-right: 1px solid #333; }
.tr { display: flex; justify-content: center; flex: none; }
.t24 { width: 24px; } .t25 { width: 25px; } .t21 { width: 21px; } .t36 { width: 36px; } .t44 { width: 44px; }
.t24 svg { width: 13px; height: 8px; }
.t25 svg { width: 14px; height: 18px; }
.t21 svg { width: 14px; height: 18px; }
.t36 svg { width: 20px; height: 16px; }
.t44 svg { width: 24px; height: 30px; }
.clock { width: 60px; display: flex; flex-direction: column; align-items: center; gap: 5px; font-size: 12px; letter-spacing: -.3px; flex: none; }
```
